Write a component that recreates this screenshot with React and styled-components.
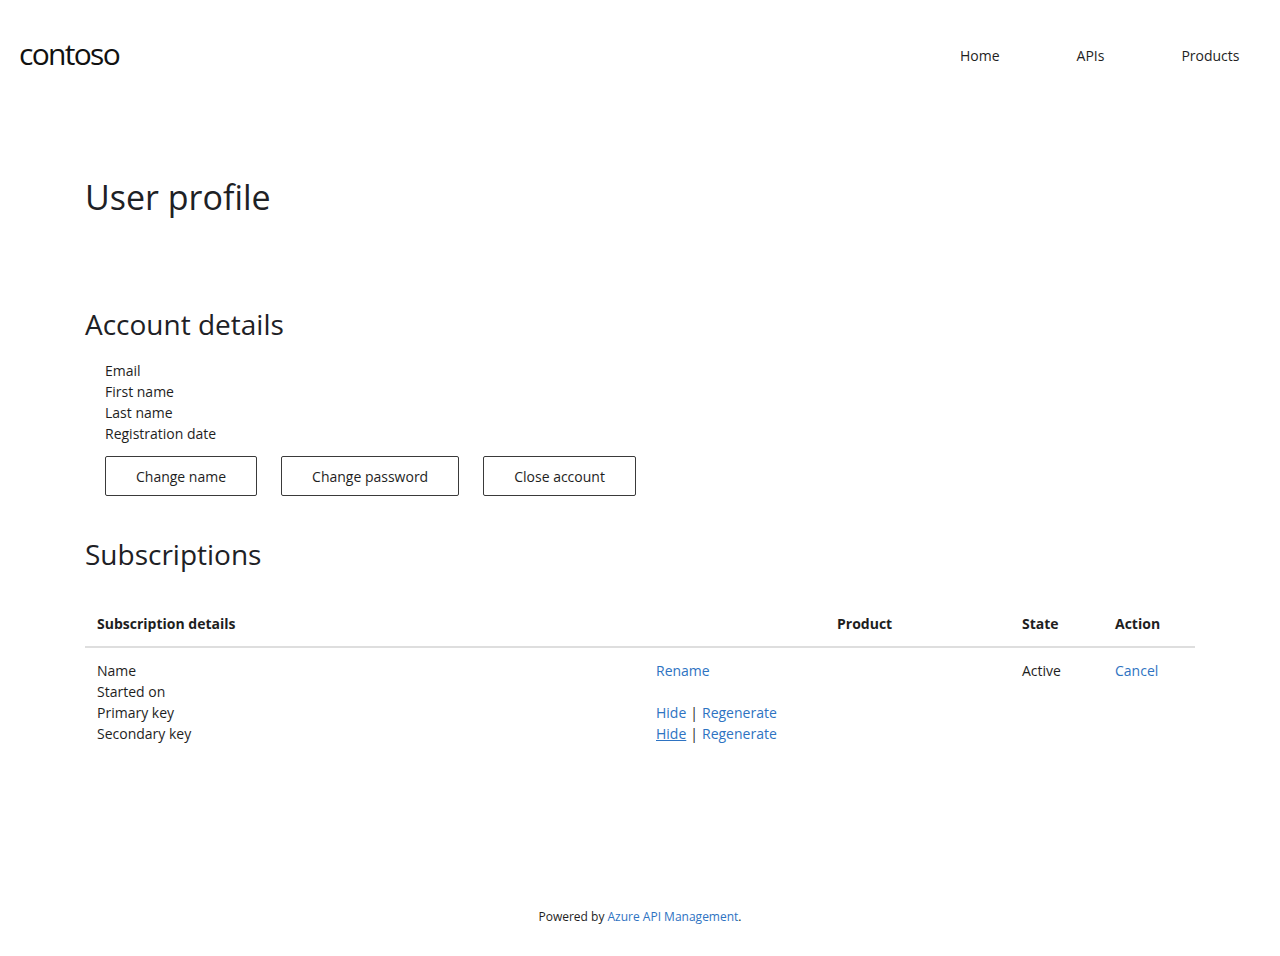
import React from "react";
import styled, { createGlobalStyle } from "styled-components";

const GlobalStyle = createGlobalStyle`
  html, body {
    margin: 0;
    padding: 0;
    background: #ffffff;
  }
  body {
    font-family: "Open Sans", "Noto Sans", "Liberation Sans", sans-serif;
    font-size: 14px;
    line-height: 21px;
    color: #1e1e1e;
  }
  * {
    box-sizing: border-box;
  }
`;

const Header = styled.header`
  height: 110px;
  display: flex;
  align-items: center;
  justify-content: space-between;
  padding-left: 19px;
  padding-right: 2px;
`;

const Logo = styled.div`
  font-family: "Open Sans", "Noto Sans", sans-serif;
  font-size: 30px;
  letter-spacing: -1.7px;
  color: #111111;
  line-height: 1;
  padding-bottom: 2px;
`;

const Nav = styled.nav`
  display: flex;
  align-items: center;
`;

const NavLink = styled.a`
  color: #1e1e1e;
  text-decoration: none;
  padding: 0 38.5px;
  font-size: 14px;
`;

const Container = styled.main`
  max-width: 1140px;
  margin: 0 auto;
  padding: 0 15px;
`;

const Title = styled.h1`
  margin: 67px 0 0;
  font-size: 34px;
  font-weight: 400;
  line-height: 41px;
  color: #1e2125;
`;

const SectionTitle = styled.h2`
  margin: ${(p) => p.$top}px 0 0;
  font-size: 28px;
  font-weight: 400;
  line-height: 34px;
  color: #1e2125;
`;

const Details = styled.div`
  margin-top: 19px;
  padding-left: 20px;
`;

const Line = styled.div`
  line-height: 21px;
`;

const ButtonRow = styled.div`
  display: flex;
  gap: 24px;
  margin-top: 12px;
`;

const Button = styled.button`
  height: 40px;
  padding: 0 30px;
  background: #ffffff;
  border: 1px solid #3a3a3a;
  border-radius: 2px;
  font-family: inherit;
  font-size: 14px;
  color: #1e1e1e;
  cursor: pointer;
`;

const Table = styled.table`
  width: 100%;
  margin-top: 30px;
  border-collapse: collapse;

  th {
    text-align: left;
    font-weight: 700;
    padding: 12px;
    border-bottom: 2px solid #dedede;
  }
  td {
    vertical-align: top;
    padding: 12px;
  }
`;

const SubGrid = styled.div`
  display: grid;
  grid-template-columns: 231px 328px 1fr;
  line-height: 21px;
`;

const Link = styled.a`
  color: #2e73c2;
  text-decoration: ${(p) => (p.$underline ? "underline" : "none")};
  cursor: pointer;
`;

const Sep = styled.span`
  color: #1e1e1e;
  margin: 0 4px;
`;

const Footer = styled.footer`
  margin-top: 152px;
  text-align: center;
  font-size: 12px;
  line-height: 18px;
  color: #1e1e1e;
`;

const rows = [
  { label: "Name", action: <Link>Rename</Link> },
  { label: "Started on", action: null },
  {
    label: "Primary key",
    action: (
      <span>
        <Link>Hide</Link>
        <Sep>|</Sep>
        <Link>Regenerate</Link>
      </span>
    ),
  },
  {
    label: "Secondary key",
    action: (
      <span>
        <Link $underline>Hide</Link>
        <Sep>|</Sep>
        <Link>Regenerate</Link>
      </span>
    ),
  },
];

export default function App() {
  return (
    <>
      <GlobalStyle />
      <Header>
        <Logo>contoso</Logo>
        <Nav>
          <NavLink>Home</NavLink>
          <NavLink>APIs</NavLink>
          <NavLink>Products</NavLink>
        </Nav>
      </Header>
      <Container>
        <Title>User profile</Title>
        <SectionTitle $top={89}>Account details</SectionTitle>
        <Details>
          <Line>Email</Line>
          <Line>First name</Line>
          <Line>Last name</Line>
          <Line>Registration date</Line>
          <ButtonRow>
            <Button>Change name</Button>
            <Button>Change password</Button>
            <Button>Close account</Button>
          </ButtonRow>
        </Details>
        <SectionTitle $top={41}>Subscriptions</SectionTitle>
        <Table>
          <thead>
            <tr>
              <th style={{ width: 740 }}>Subscription details</th>
              <th style={{ width: 185 }}>Product</th>
              <th style={{ width: 93 }}>State</th>
              <th>Action</th>
            </tr>
          </thead>
          <tbody>
            <tr>
              <td>
                <SubGrid>
                  {rows.map((r) => (
                    <React.Fragment key={r.label}>
                      <div>{r.label}</div>
                      <div />
                      <div>{r.action}</div>
                    </React.Fragment>
                  ))}
                </SubGrid>
              </td>
              <td />
              <td>Active</td>
              <td>
                <Link>Cancel</Link>
              </td>
            </tr>
          </tbody>
        </Table>
      </Container>
      <Footer>
        Powered by <Link>Azure API Management</Link>.
      </Footer>
    </>
  );
}
